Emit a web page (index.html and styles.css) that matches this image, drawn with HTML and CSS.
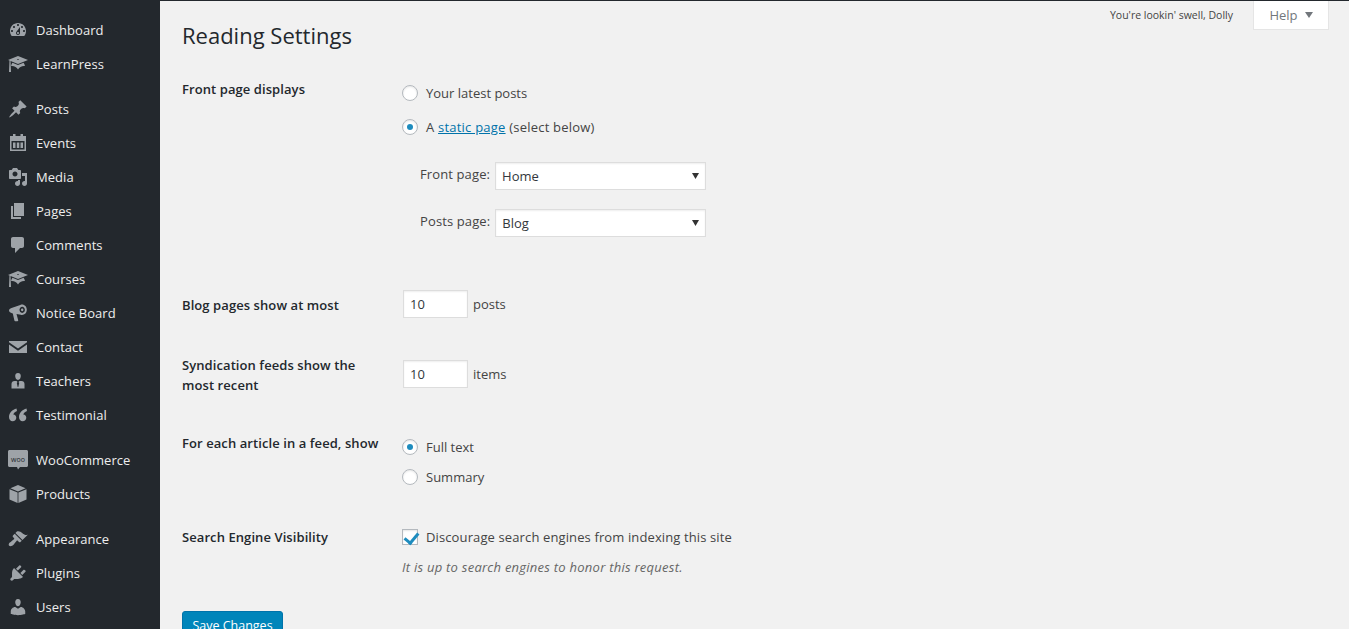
FILE: index.html
```html
<!DOCTYPE html>
<html lang="en">
<head>
<meta charset="utf-8">
<title>Reading Settings</title>
<link rel="stylesheet" href="styles.css">
</head>
<body>
<div class="shell">
<nav class="sidebar">
  <ul class="menu">
    <li><a href="#"><svg class="ico" viewBox="0 0 20 20"><path fill-rule="evenodd" d="M3.76 16h12.48c1.1-1.37 1.76-3.11 1.76-5 0-4.42-3.58-8-8-8s-8 3.58-8 8c0 1.89.66 3.63 1.76 5zM10 4c.55 0 1 .45 1 1s-.45 1-1 1-1-.45-1-1 .45-1 1-1zM6 6c.55 0 1 .45 1 1s-.45 1-1 1-1-.45-1-1 .45-1 1-1zm8 0c.55 0 1 .45 1 1s-.45 1-1 1-1-.45-1-1 .45-1 1-1zm-5.37 5.55L12 7v6c0 1.1-.9 2-2 2s-2-.9-2-2c0-.57.24-1.08.63-1.45zM4 10c.55 0 1 .45 1 1s-.45 1-1 1-1-.45-1-1 .45-1 1-1zm12 0c.55 0 1 .45 1 1s-.45 1-1 1-1-.45-1-1 .45-1 1-1zm-5 3c0-.55-.45-1-1-1s-1 .45-1 1 .45 1 1 1 1-.45 1-1z"/></svg>Dashboard</a></li>
    <li class="group-end"><a href="#"><svg class="ico" viewBox="0 0 20 20"><path d="M10 10L2.54 7.02 3 18H1l.48-11.41L0 6l10-4 10 4zm0-5c-.55 0-1 .22-1 .5s.45.5 1 .5 1-.22 1-.5-.45-.5-1-.5zm0 6l5.57-2.23c.71.94 1.2 2.07 1.36 3.3-.3-.04-.61-.07-.93-.07-2.55 0-4.78 1.37-6 3.41C8.78 13.37 6.55 12 4 12c-.32 0-.63.03-.93.07.16-1.23.65-2.36 1.36-3.3z"/></svg>LearnPress</a></li>
    <li><a href="#"><svg class="ico" viewBox="0 0 20 20"><path d="M10.44 3.02l1.82-1.82 6.36 6.35-1.83 1.82c-1.05-.68-2.48-.57-3.41.36l-.75.75c-.92.93-1.04 2.35-.35 3.41l-1.83 1.82-2.41-2.41-2.8 2.79c-.42.42-3.38 2.71-3.8 2.29s1.86-3.39 2.28-3.81l2.79-2.79L4.1 9.36l1.83-1.82c1.05.69 2.48.57 3.4-.36l.75-.75c.93-.92 1.05-2.35.36-3.41z"/></svg>Posts</a></li>
    <li><a href="#"><svg class="ico" viewBox="0 0 20 20"><path fill-rule="evenodd" d="M5 1h2.500v2h5V1H15v2h3v15H2V3h3zM3.500 8v8.500h13V8zM5 9.500h2.500v5.500H5zm3.800 0h2.500v5.500H8.800zm3.700 0H15v5.500h-2.500z"/></svg>Events</a></li>
    <li><a href="#"><svg class="ico" viewBox="0 0 20 20"><path fill-rule="evenodd" d="M13 11V4c0-.55-.45-1-1-1h-1.67L9 1H5L3.67 3H2c-.55 0-1 .45-1 1v7c0 .55.45 1 1 1h10c.55 0 1-.45 1-1zM7 4.500c1.380 0 2.500 1.120 2.500 2.500S8.380 9.500 7 9.500 4.500 8.380 4.500 7 5.620 4.500 7 4.500zM14 6h5v10.500c0 1.380-1.120 2.500-2.500 2.500S14 17.880 14 16.500s1.120-2.500 2.500-2.500c.17 0 .34.02.5.05V9h-3V6zm-4 8.050V13h2v3.500c0 1.380-1.120 2.500-2.500 2.500S7 17.880 7 16.500 8.120 14 9.500 14c.17 0 .34.02.5.05z"/></svg>Media</a></li>
    <li><a href="#"><svg class="ico" viewBox="0 0 20 20"><path d="M6 15V2h10v13H6zm-1 1h8v2H3V5h2v11z"/></svg>Pages</a></li>
    <li><a href="#"><svg class="ico" viewBox="0 0 20 20"><path d="M5 2h9c1.100 0 2 .9 2 2v7c0 1.100-.9 2-2 2h-2l-5 5v-5H5c-1.100 0-2-.9-2-2V4c0-1.100.9-2 2-2z"/></svg>Comments</a></li>
    <li><a href="#"><svg class="ico" viewBox="0 0 20 20"><path d="M10 10L2.540 7.020 3 18H1l.48-11.410L0 6l10-4 10 4zm0-5c-.55 0-1 .22-1 .5s.45.5 1 .5 1-.22 1-.5-.45-.5-1-.5zm0 6l5.570-2.230c.71.94 1.200 2.070 1.360 3.300-.3-.04-.61-.07-.93-.07-2.550 0-4.780 1.370-6 3.410C8.780 13.370 6.550 12 4 12c-.32 0-.63.03-.93.07.16-1.230.65-2.360 1.360-3.300z"/></svg>Courses</a></li>
    <li><a href="#"><svg class="ico" viewBox="0 0 20 20"><path fill-rule="evenodd" d="M14 1.500c2.700 0 4.800 2.300 4.800 5.300S16.700 12 14 12c-.4 0-.8-.1-1.200-.2L8.500 11l1.700 6.300c.1.5-.2.9-.7.9H7.200c-.4 0-.7-.2-.8-.6L4.800 10.400 3.500 10C2 9.600 1 8.700 1 7.500s1-2.200 2.500-2.600l8.800-3c.5-.3 1.100-.4 1.700-.4zm.2 2.200c-1.500 0-2.700 1.400-2.700 3.100s1.200 3.100 2.700 3.100 2.700-1.400 2.700-3.100-1.200-3.100-2.700-3.100zm0 1.700c.7 0 1.200.6 1.200 1.400s-.5 1.400-1.200 1.400-1.200-.6-1.200-1.400.5-1.400 1.200-1.400z"/></svg>Notice Board</a></li>
    <li><a href="#"><svg class="ico" viewBox="0 0 20 20"><path d="M1 4h18v1.200l-9 6.300-9-6.300zM1 7.500l9 6.300 9-6.300V16H1z"/></svg>Contact</a></li>
    <li><a href="#"><svg class="ico" viewBox="0 0 20 20"><path fill-rule="evenodd" d="M10 2c1.800 0 2.800 1.300 2.800 3S11.800 9 10 9 7.200 6.700 7.200 5 8.200 2 10 2zM6.500 10h2l1 1-.7 1 .9 4h.6l.9-4-.7-1 1-1h2c1.800 0 3 1.300 3 3v4.500H3.500V13c0-1.700 1.200-3 3-3z"/></svg>Teachers</a></li>
    <li class="group-end"><a href="#"><svg class="ico" viewBox="0 0 20 20"><path d="M8.500 3.500C4.500 4.800 1 7.600 1 12c0 2.400 1.500 4.200 3.600 4.200S8.300 14.700 8.300 12.800c0-1.800-1.200-3.100-3-3.300.4-1.500 1.700-2.800 3.700-3.600zM18.500 3.500c-4 1.300-7.500 4.100-7.500 8.500 0 2.400 1.500 4.200 3.600 4.200s3.700-1.500 3.700-3.400c0-1.800-1.200-3.100-3-3.300.4-1.500 1.700-2.800 3.700-3.600z"/></svg>Testimonial</a></li>
    <li><a href="#"><svg class="ico" viewBox="0 0 20 20"><path d="M1.500 0h17c.8 0 1.500.7 1.500 1.500v14c0 .8-.7 1.500-1.500 1.500H12l-2 2.500L9 17H1.500C.7 17 0 16.300 0 15.500v-14C0 .7.700 0 1.500 0z"/><text class="woo" x="10" y="11.500" text-anchor="middle">woo</text></svg>WooCommerce</a></li>
    <li class="group-end"><a href="#"><svg class="ico" viewBox="0 0 20 20"><path d="M10 1l7.600 3.200L10 7.500 2.400 4.200zM1.500 5.200L9.600 8.600V19l-8.100-3.500zM18.500 5.200v10.300L10.400 19V8.600z"/></svg>Products</a></li>
    <li><a href="#"><svg class="ico" viewBox="0 0 20 20"><path d="M14.480 11.060L7.410 3.990l1.500-1.500c.5-.56 2.300-.47 3.510.32 1.210.8 1.430 1.280 2.910 2.100 1.180.64 2.450 1.260 4.450.85zm-.71.71L6.700 4.700 4.930 6.470c-.39.39-.39 1.020 0 1.410l1.060 1.060c.39.39.39 1.030 0 1.420-.6.6-1.430 1.110-2.210 1.690-.35.26-.7.53-1.010.84C1.430 13.230 0 15.490 1.200 16.700s3.470-.23 4.820-1.570c.31-.31.58-.66.84-1.010.58-.78 1.090-1.610 1.690-2.210.39-.39 1.030-.39 1.420 0l1.060 1.060c.39.39 1.020.39 1.410 0z"/></svg>Appearance</a></li>
    <li><a href="#"><svg class="ico" viewBox="0 0 20 20"><path d="M13.110 4.360L9.870 7.600 8 5.730l3.240-3.240c.35-.34 1.050-.2 1.560.32.520.51.660 1.210.31 1.550zm-8 1.770l.91-1.120 9.010 9.010-1.190.84c-.71.71-2.630 1.160-3.820 1.160H6.140L4.900 17.260c-.59.59-1.540.59-2.120 0-.59-.58-.59-1.530 0-2.120l1.240-1.240v-3.880c0-1.130.4-3.190 1.090-3.890zm7.260 3.970l3.240-3.240c.34-.35 1.040-.21 1.550.31.520.51.660 1.210.31 1.550l-3.240 3.250z"/></svg>Plugins</a></li>
    <li><a href="#"><svg class="ico" viewBox="0 0 20 20"><path d="M10 9.250c-2.270 0-2.730-3.440-2.730-3.440C7 4.020 7.820 2 9.970 2c2.160 0 2.980 2.020 2.710 3.810 0 0-.41 3.440-2.680 3.440zm0 2.570L12.720 10c2.390 0 4.520 2.330 4.520 4.530v2.490s-3.650 1.130-7.240 1.130c-3.650 0-7.240-1.130-7.240-1.130v-2.490c0-2.250 1.940-4.480 4.470-4.480z"/></svg>Users</a></li>
  </ul>
</nav>
<main class="content">
  <div class="topbar">
    <p class="dolly">You're lookin' swell, Dolly</p>
    <button class="help" type="button">Help <svg class="caret" viewBox="0 0 8 6"><path d="M0 0h8L4 6z"/></svg></button>
  </div>
  <h1>Reading Settings</h1>
  <form>
    <div class="row row-front">
      <div class="label">Front page displays</div>
      <div class="field">
        <label class="opt"><input type="radio" name="front">Your latest posts</label>
        <label class="opt opt-static"><input type="radio" name="front" checked><span>A <a href="#">static page</a> (select below)</span></label>
        <label class="pick pick-first">Front page: <select><option>Home</option></select></label>
        <label class="pick">Posts page: <select><option>Blog</option></select></label>
      </div>
    </div>
    <div class="row row-blog">
      <div class="label">Blog pages show at most</div>
      <div class="field inline"><input class="num" type="text" value="10"> posts</div>
    </div>
    <div class="row row-synd">
      <div class="label two">Syndication feeds show the most recent</div>
      <div class="field inline"><input class="num" type="text" value="10"> items</div>
    </div>
    <div class="row row-feed">
      <div class="label">For each article in a feed, show</div>
      <div class="field">
        <label class="opt"><input type="radio" name="feed" checked>Full text</label>
        <label class="opt opt-summary"><input type="radio" name="feed">Summary</label>
      </div>
    </div>
    <div class="row row-search">
      <div class="label">Search Engine Visibility</div>
      <div class="field">
        <label class="opt wide"><input class="check" type="checkbox" checked>Discourage search engines from indexing this site</label>
        <p class="desc">It is up to search engines to honor this request.</p>
      </div>
    </div>
    <button class="save" type="button">Save Changes</button>
  </form>
</main>
</div>
</body>
</html>
```

FILE: styles.css
```css
* { box-sizing: border-box; }
html, body { margin: 0; height: 100%; overflow: hidden; }
body {
  background: #f1f1f1;
  color: #444;
  font-family: "Open Sans", sans-serif;
  font-size: 13px;
  line-height: 1.4;
  border-top: 1px solid #23282d;
}
.shell { display: flex; height: 628px; overflow: hidden; }

.sidebar { width: 160px; flex: none; background: #23282d; padding-top: 12px; }
.menu { list-style: none; margin: 0; padding: 0; }
.menu li { height: 34px; }
.menu .group-end { margin-bottom: 11px; }
.menu a {
  display: flex;
  align-items: center;
  height: 34px;
  padding-left: 8px;
  color: #eee;
  text-decoration: none;
  font-size: 13px;
  letter-spacing: .05px;
}
.ico { width: 20px; height: 20px; margin-right: 8px; flex: none; fill: #9ea3a8; }
.woo { font: 7px "Open Sans", sans-serif; fill: #23282d; letter-spacing: 0; }

.content { flex: 1; min-width: 0; padding-left: 22px; position: relative; }
.topbar {
  position: absolute;
  top: 0;
  right: 20px;
  display: flex;
  align-items: flex-start;
}
.dolly { margin: 7px 20px 0 0; font-size: 10.5px; line-height: 14px; color: #444; }
.help {
  display: flex;
  align-items: center;
  justify-content: center;
  gap: 7px;
  width: 76px;
  height: 29px;
  background: #fff;
  border: 1px solid #e5e5e5;
  border-top: 0;
  padding: 0;
  font: 13px "Open Sans", sans-serif;
  color: #72777c;
}
.caret { width: 8px; height: 6px; fill: #72777c; }

h1 {
  margin: 0;
  padding-top: 20px;
  font-size: 22px;
  font-weight: 400;
  line-height: 28px;
  color: #23282d;
}
form { margin: 0; }
.row { display: flex; }
.label {
  width: 220px;
  flex: none;
  padding-right: 10px;
  font-weight: 600;
  font-size: 13px;
  line-height: 20px;
  color: #23282d;
  letter-spacing: .08px;
}
.label.two { padding-right: 30px; }
.field { flex: 1; min-width: 0; }
.inline { display: flex; align-items: flex-start; padding-left: 1px; line-height: 28px; }

.row-front { margin-top: 30px; }
.row-front .field { padding-top: 4px; }
.row-blog { margin-top: 53px; }
.row-blog .label { padding-top: 5px; }
.row-synd { margin-top: 37px; }
.row-synd .field { padding-top: 5px; }
.row-feed { margin-top: 38px; }
.row-feed .field { padding-top: 4px; }
.row-search { margin-top: 40px; }

.opt { display: flex; align-items: center; height: 20px; color: #444; }
.wide { letter-spacing: .12px; }
.opt-static { margin-top: 14px; letter-spacing: .22px; }
.opt-summary { margin-top: 10px; }
.opt a { color: #0073aa; }

input[type="radio"], input[type="checkbox"] {
  appearance: none;
  width: 16px;
  height: 16px;
  margin: 0 8px 0 0;
  flex: none;
  background: #fff;
  border: 1px solid #b4b9be;
  box-shadow: inset 0 1px 2px rgba(0,0,0,.1);
}
input[type="radio"] { border-radius: 50%; position: relative; }
input[type="radio"]:checked::before {
  content: "";
  position: absolute;
  left: 4px;
  top: 4px;
  width: 6px;
  height: 6px;
  border-radius: 50%;
  background: #1e8cbe;
}
.check { position: relative; }
.check:checked::before {
  content: "";
  position: absolute;
  left: 4px;
  top: 0;
  width: 6px;
  height: 11px;
  border: solid #1e8cbe;
  border-width: 0 3px 3px 0;
  transform: rotate(40deg);
}

.pick { display: flex; align-items: flex-start; padding-left: 18px; height: 28px; gap: 5px; color: #444; margin-top: 19px; line-height: 24px; letter-spacing: .12px; }
.pick-first { margin-top: 25px; }
select {
  appearance: none;
  width: 211px;
  height: 28px;
  padding: 0 24px 0 6px;
  background: #fff url("data:image/svg+xml,%3Csvg xmlns='http://www.w3.org/2000/svg' width='7' height='6'%3E%3Cpath d='M0 0h7L3.500 6z' fill='%23333'/%3E%3C/svg%3E") no-repeat right 6px center;
  border: 1px solid #ddd;
  border-radius: 0;
  font: 13px "Open Sans", sans-serif;
  color: #32373c;
  box-shadow: inset 0 1px 2px rgba(0,0,0,.07);
}
.num {
  width: 65px;
  height: 28px;
  margin-right: 5px;
  padding: 0 6px;
  background: #fff;
  border: 1px solid #ddd;
  font: 13px "Open Sans", sans-serif;
  color: #32373c;
  box-shadow: inset 0 1px 2px rgba(0,0,0,.07);
}
.desc { margin: 10px 0 0; font-style: italic; color: #666; line-height: 20px; letter-spacing: .25px; }

.save {
  display: block;
  margin-top: 34px;
  width: 101px;
  height: 30px;
  padding: 0;
  background: #0085ba;
  border: 1px solid #0073aa;
  border-radius: 3px;
  color: #fff;
  font: 12.5px/28px "Open Sans", sans-serif;
}
```
